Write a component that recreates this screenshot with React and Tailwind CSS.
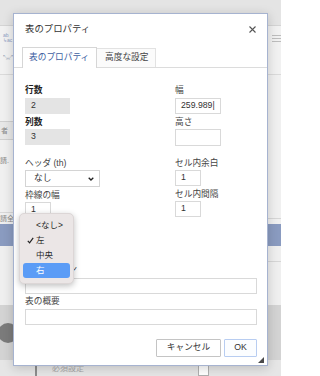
import React from 'react';

const Label = ({ children, bold, className = '' }) => (
  <div
    className={`text-[8.7px] leading-[11px] whitespace-nowrap ${
      bold ? 'font-bold text-[#1f1f1f]' : 'text-[#454545]'
    } ${className}`}
  >
    {children}
  </div>
);

const Field = ({ value = '', width, disabled, className = '' }) => (
  <div
    className={`h-[16px] ${width} flex items-center pl-[5px] text-[8.7px] text-[#333] overflow-hidden whitespace-nowrap border ${
      disabled ? 'bg-[#e4e4e4] border-[#e4e4e4]' : 'bg-white border-[#d9d9d9]'
    } ${className}`}
  >
    {value}
  </div>
);

const SelectBox = ({ value, width = 'w-[75px]', className = '' }) => (
  <div
    className={`h-[17px] ${width} flex items-center justify-between pl-[8px] pr-[5px] bg-white border border-[#d4d4d4] text-[8.7px] text-[#333] ${className}`}
  >
    <span>{value}</span>
    <svg width="6" height="4" viewBox="0 0 6 4">
      <path d="M0.7 0.7 L3 3 L5.3 0.7" fill="none" stroke="#222" strokeWidth="1.3" />
    </svg>
  </div>
);

// native select popup for 配置 (opened)
const AlignPopup = () => {
  const items = ['<なし>', '左', '中央', '右'];
  return (
    <div className="absolute left-[5px] top-[145px] w-[55px] pt-[4px] pb-[5px] rounded-[5px] bg-[#ebe6e6] shadow-[0_2px_6px_rgba(0,0,0,0.25)] border border-[#dcd6d6]">
      {items.map((item) => (
        <div
          key={item}
          className={`relative mx-[3px] h-[15px] flex items-center pl-[13px] rounded-[3px] text-[8.5px] ${
            item === '右' ? 'bg-[#5b9cf6] text-white' : 'text-[#2a2a2a]'
          }`}
        >
          {item === '左' && (
            <svg className="absolute left-[4px] top-[4px]" width="7" height="7" viewBox="0 0 7 7">
              <path d="M0.8 3.8 L2.6 5.8 L6.2 0.8" fill="none" stroke="#222" strokeWidth="1.2" />
            </svg>
          )}
          {item}
        </div>
      ))}
    </div>
  );
};

const TableDialog = () => (
  <div className="absolute left-[13px] top-[13px] w-[255px] h-[353px] bg-white border border-[#a6b3d0] shadow-[0_2px_10px_rgba(0,0,0,0.18)] flex flex-col">
    {/* Title */}
    <div className="h-[33px] flex items-start justify-between pl-[11px] pr-[11px] pt-[9px]">
      <span className="text-[9.4px] leading-[12px] text-[#333]">表のプロパティ</span>
      <svg className="mt-[3px]" width="7" height="7" viewBox="0 0 7 7">
        <path d="M0.5 0.5 L6.5 6.5 M6.5 0.5 L0.5 6.5" stroke="#555" strokeWidth="1.1" />
      </svg>
    </div>

    {/* Tabs */}
    <div className="h-[21px] flex items-end pl-[8px] border-b border-[#dcdcdc]">
      <div className="relative -mb-px h-[21px] w-[75px] flex items-center pl-[6px] bg-white border border-b-0 border-[#d6d6d6] text-[8.7px] text-[#40609f]">
        表のプロパティ
      </div>
      <div className="h-[19px] w-[59px] flex items-center pl-[8px] bg-[#fbfbfb] border-t border-r border-[#e2e2e2] text-[8.7px] text-[#444]">
        高度な設定
      </div>
    </div>

    {/* Body */}
    <div className="relative flex-1 pl-[11px] pr-[10px] pt-[17px] flex flex-col">
      <div className="grid grid-cols-[150px_1fr]">
        <div className="flex flex-col">
          <Label bold>行数</Label>
          <Field value="2" width="w-[45px]" disabled className="mt-[2px]" />
          <Label bold className="mt-[3px]">列数</Label>
          <Field value="3" width="w-[45px]" disabled className="mt-[1px]" />
          <Label className="mt-[13px]">ヘッダ (th)</Label>
          <SelectBox value="なし" className="mt-[1px]" />
          <Label className="mt-[3px]">枠線の幅</Label>
          <Field value="1" width="w-[26px]" className="mt-[1px]" />
          <Label className="mt-[3px]">配置</Label>
          <SelectBox value="左" width="w-[46px]" className="mt-[1px]" />
        </div>
        <div className="flex flex-col">
          <Label>幅</Label>
          <Field value="259.989|" width="w-[46px]" className="mt-[2px]" />
          <Label className="mt-[3px]">高さ</Label>
          <Field width="w-[46px]" className="mt-[1px] h-[17px]" />
          <Label className="mt-[12px]">セル内余白</Label>
          <Field value="1" width="w-[26px]" className="mt-[1px]" />
          <Label className="mt-[3px]">セル内間隔</Label>
          <Field value="1" width="w-[26px]" className="mt-[1px]" />
        </div>
      </div>

      <Label className="mt-[14px]">キャプション</Label>
      <Field width="w-full" className="mt-[3px]" />
      <Label className="mt-[2px]">表の概要</Label>
      <Field width="w-full" className="mt-[2px]" />

      <div className="mt-[14px] flex justify-end gap-[3px]">
        <div className="h-[18px] w-[65px] flex items-center justify-center bg-white border border-[#c4c4c4] rounded-[1px] text-[8.7px] text-[#333]">
          キャンセル
        </div>
        <div className="h-[18px] w-[33px] flex items-center justify-center bg-[#fbfdff] border border-[#b8cdf1] rounded-[1px] text-[8.7px] text-[#333]">
          OK
        </div>
      </div>

      <AlignPopup />
    </div>

    {/* resize grip */}
    <svg className="absolute right-[3px] bottom-[2px]" width="6" height="6" viewBox="0 0 6 6">
      <path d="M6 0 L6 6 L0 6 Z" fill="#4a4a4a" />
    </svg>
  </div>
);

const Backdrop = () => (
  <div className="flex flex-col w-full h-full">
    <div className="h-[25px] bg-[#e4e4e4]" />
    <div className="h-[1px] bg-[#d4d4d4]" />
    <div className="h-[49px] bg-[#f1f1f1] flex justify-between">
      <div className="w-[13px] pl-[3px] pt-[7px] flex flex-col">
        <span className="text-[5px] leading-[5px] text-[#8ea0c4]">ab</span>
        <span className="text-[5px] leading-[5px] text-[#8ea0c4]">↳ac</span>
        <span className="mt-[11px] text-[6px] leading-[6px] text-[#8a96ad]">⤡⤢</span>
      </div>
      <div className="w-[9px] pt-[9px] flex flex-col gap-[2px]">
        <div className="h-[1px] bg-[#bdbdbd]" />
        <div className="h-[1px] bg-[#bdbdbd]" />
        <div className="h-[1px] bg-[#bdbdbd]" />
      </div>
    </div>
    <div className="h-[1px] bg-[#dadada]" />
    <div className="h-[152px] bg-[#f0f0f0] flex justify-between">
      <div className="w-[14px] flex flex-col">
        <div className="mt-[46px] h-[19px] pl-[1px] bg-[#e7e7e7] border-y border-[#cfcfcf] text-[7px] leading-[17px] text-[#888]">者</div>
        <div className="mt-[16px] text-[7px] leading-[10px] text-[#888] whitespace-nowrap">請.</div>
        <div className="mt-[46px] h-[1px] bg-[#d8d8d8]" />
        <div className="mt-[1px] text-[7px] leading-[10px] text-[#888] whitespace-nowrap">請全</div>
      </div>
      <div className="w-[14px] flex flex-col">
        <div className="mt-[143px] h-[1px] bg-[#d6d6d6]" />
      </div>
    </div>
    <div className="h-[22px] bg-[#8a9bc0]" />
    <div className="h-[60px] bg-[#efefef] flex justify-end">
      <div className="w-[14px]">
        <div className="mt-[15px] h-[1px] bg-[#d6d6d6]" />
      </div>
    </div>
    <div className="h-[56px] bg-[#d3d3d3] flex">
      <div className="mt-[18px] -ml-[2px] w-[20px] h-[20px] rounded-full bg-[#7b7b7b]" />
    </div>
    <div className="flex-1 bg-[#e6e6e6] flex items-start">
      <div className="ml-[35px] w-[2px] h-full bg-[#8d8d8d]" />
      <span className="ml-[15px] mt-[3px] text-[8px] leading-[12px] text-[#a8a8a8]">必須設定</span>
      <div className="ml-[114px] mt-[5px] w-[11px] h-[11px] border border-[#b0b0b0] bg-white" />
    </div>
  </div>
);

export default function App() {
  return (
    <div className="relative w-[281px] h-[376px] overflow-hidden font-['Liberation_Sans','Noto_Sans_CJK_JP',sans-serif]">
      <Backdrop />
      <TableDialog />
    </div>
  );
}
